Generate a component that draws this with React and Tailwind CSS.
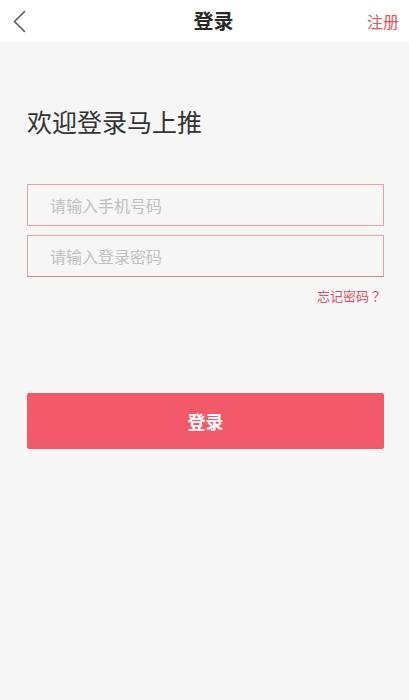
import React from 'react';

export default function App() {
  return (
    <div className="w-[409px] h-[700px] bg-[#f6f6f6] flex flex-col font-['Noto_Sans_CJK_SC',sans-serif]">
      <header className="h-[42px] bg-white flex items-center">
        <div className="w-[60px] h-full flex items-center pl-[13px]">
          <svg width="13" height="23" viewBox="0 0 13 23" fill="none">
            <path d="M11.5 1.5 L1.5 11.5 L11.5 21.5" stroke="#5a5a5a" strokeWidth="1.6" strokeLinecap="round" strokeLinejoin="round" />
          </svg>
        </div>
        <h1 className="flex-1 text-center text-[20px] font-bold text-[#2a2a2a] leading-none">登录</h1>
        <div className="w-[42px] flex justify-end pr-[10px]">
          <span className="text-[16px] text-[#e0525f] leading-none">注册</span>
        </div>
      </header>

      <main className="pl-[27px] pr-[25px] flex flex-col">
        <h2 className="mt-[64px] text-[25px] text-[#333] leading-[30px]">欢迎登录马上推</h2>

        <div className="mt-[48px] h-[42px] border border-[#e8a0a5] flex items-center pl-[22px]">
          <input
            className="w-full bg-transparent outline-none text-[16px] placeholder:text-[#c0c0c0]"
            placeholder="请输入手机号码"
          />
        </div>
        <div className="mt-[9px] h-[42px] border border-[#e8a0a5] border-b-[#d9838a] flex items-center pl-[22px]">
          <input
            type="password"
            className="w-full bg-transparent outline-none text-[16px] placeholder:text-[#c0c0c0]"
            placeholder="请输入登录密码"
          />
        </div>
        <div className="mt-[10px] flex justify-end pr-[2px]">
          <span className="text-[13px] text-[#e0525f] leading-[18px]">
            忘记密码<span className="font-['Noto_Sans_CJK_TC',sans-serif]">？</span>
          </span>
        </div>

        <button className="mt-[88px] h-[56px] rounded-[2px] bg-[#f25a69] text-white text-[18px] font-bold">
          登录
        </button>
      </main>
    </div>
  );
}
